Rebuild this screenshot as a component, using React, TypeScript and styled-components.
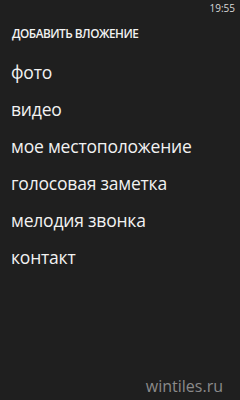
import React from 'react'
import styled, { createGlobalStyle } from 'styled-components'

const GlobalStyle = createGlobalStyle`
  html, body {
    margin: 0;
    padding: 0;
    background: #1f1f1f;
  }
  body {
    font-family: 'Open Sans', 'Noto Sans', sans-serif;
  }
`

const Screen = styled.div`
  width: 240px;
  height: 400px;
  background: #1f1f1f;
  color: #f2f2f2;
  display: flex;
  flex-direction: column;
  overflow: hidden;
`

const StatusBar = styled.div`
  height: 15px;
  display: flex;
  justify-content: flex-end;
  align-items: center;
  padding: 0 5px 0 0;
  font-size: 10px;
  color: #d8d8d8;
`

const Title = styled.div`
  margin: 9px 0 0 12px;
  font-size: 11.8px;
  font-weight: 600;
  line-height: 18px;
  letter-spacing: -0.5px;
`

const Menu = styled.ul`
  list-style: none;
  margin: 12px 0 0 0;
  padding: 0 0 0 11px;
  display: flex;
  flex-direction: column;
`

const MenuItem = styled.li`
  font-size: 17.5px;
  line-height: 37px;
  height: 37px;
  letter-spacing: -0.2px;
`

const Watermark = styled.div`
  margin-top: auto;
  align-self: flex-end;
  margin-right: 17px;
  margin-bottom: 3px;
  font-size: 16px;
  color: #8a8a8a;
`

const items = ['фото', 'видео', 'мое местоположение', 'голосовая заметка', 'мелодия звонка', 'контакт']

export default function App() {
  return (
    <Screen>
      <GlobalStyle />
      <StatusBar>19:55</StatusBar>
      <Title>ДОБАВИТЬ ВЛОЖЕНИЕ</Title>
      <Menu>
        {items.map(item => (
          <MenuItem key={item}>{item}</MenuItem>
        ))}
      </Menu>
      <Watermark>wintiles.ru</Watermark>
    </Screen>
  )
}
